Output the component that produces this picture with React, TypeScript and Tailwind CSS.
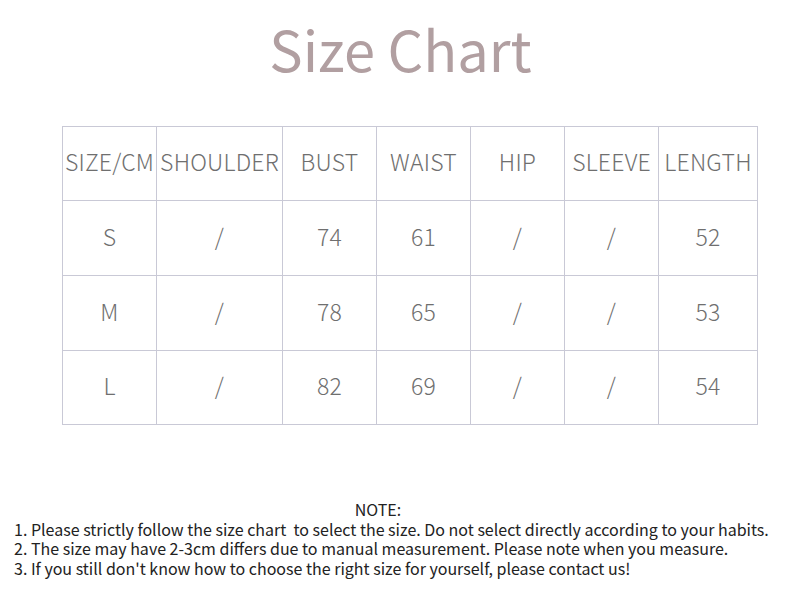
import React from "react";

const cols = [94, 126, 94, 94, 94, 94, 99];
const header = ["SIZE/CM", "SHOULDER", "BUST", "WAIST", "HIP", "SLEEVE", "LENGTH"];
const rows = [
  ["S", "/", "74", "61", "/", "/", "52"],
  ["M", "/", "78", "65", "/", "/", "53"],
  ["L", "/", "82", "69", "/", "/", "54"],
];

export default function App() {
  const font = { fontFamily: '"Noto Sans CJK SC", "Noto Sans", sans-serif' };
  return (
    <div className="w-[800px] h-[600px] bg-white overflow-hidden" style={font}>
      <div className="h-[112px] flex justify-center pt-[8px]">
        <div className="text-[56px] leading-[80px] font-normal text-[#b19fa1] ml-[1px]">Size Chart</div>
      </div>
      <div className="ml-[62px] mt-[14px] w-[696px] border-t border-l border-[#c9c9d6]">
        {[header, ...rows].map((r, ri) => (
          <div key={ri} className={`flex ${ri === 0 ? "h-[74px]" : ri === 3 ? "h-[74px]" : "h-[75px]"}`}>
            {r.map((c, ci) => (
              <div
                key={ci}
                style={{ width: cols[ci] }}
                className="border-r border-b border-[#c9c9d6] flex items-center justify-center pb-[4px] text-[23px] font-light text-[#6f6f6f] whitespace-nowrap overflow-visible tracking-[0.2px]"
              >
                {c}
              </div>
            ))}
          </div>
        ))}
      </div>
      <div className="mt-[75px] pl-[14px] text-[16px] leading-[19.5px] text-[#222222]">
        <div className="w-[728px] text-center">NOTE:</div>
        <div>1. Please strictly follow the size chart&nbsp; to select the size. Do not select directly according to your habits.</div>
        <div>2. The size may have 2-3cm differs due to manual measurement. Please note when you measure.</div>
        <div>3. If you still don't know how to choose the right size for yourself, please contact us!</div>
      </div>
    </div>
  );
}
